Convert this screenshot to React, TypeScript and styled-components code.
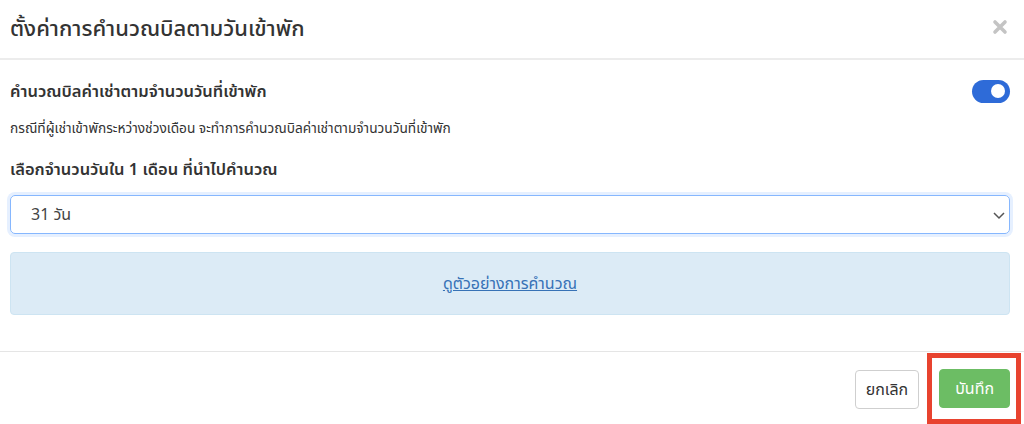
import React from "react";
import styled, { createGlobalStyle } from "styled-components";

const Global = createGlobalStyle`
  html, body { margin: 0; padding: 0; background: #fff; }
  body { font-family: "Noto Sans", "Noto Sans Thai", "Noto Sans Thai Looped", sans-serif; color: #333; }
`;

const Modal = styled.div`
  width: 1024px;
  height: 424px;
  display: flex;
  flex-direction: column;
  background: #fff;
  overflow: hidden;
`;

const Header = styled.div`
  height: 60px;
  display: flex;
  align-items: center;
  justify-content: space-between;
  padding: 0 14px 4px 10px;
  box-sizing: border-box;
  border-bottom: 2px solid #ececec;
  flex-shrink: 0;
`;

const Title = styled.h4`
  margin: 0;
  font-size: 22px;
  line-height: 30px;
  font-weight: 500;
  color: #333;
`;

const Close = styled.button`
  border: none;
  background: none;
  padding: 0;
  width: 20px;
  height: 20px;
  display: flex;
  align-items: center;
  justify-content: center;
  cursor: pointer;
`;

const Body = styled.div`
  padding: 17px 14px 0 10px;
  display: flex;
  flex-direction: column;
  height: 292px;
  box-sizing: border-box;
  border-bottom: 1px solid #e5e5e5;
  flex-shrink: 0;
`;

const Row = styled.div`
  display: flex;
  justify-content: space-between;
  align-items: center;
  height: 28px;
`;

const Label = styled.div`
  font-size: 16.5px;
  line-height: 22px;
  font-weight: 600;
  color: #333;
`;

const Desc = styled.div`
  font-size: 13.7px;
  line-height: 19px;
  color: #333;
  margin-top: 13px;
`;

const Label2 = styled(Label)`
  margin-top: 21px;
`;

const Toggle = styled.div`
  width: 38px;
  height: 23px;
  border-radius: 12px;
  background: #2e6bd8;
  position: relative;
  &::after {
    content: "";
    position: absolute;
    right: 5px;
    top: 4.5px;
    width: 14px;
    height: 14px;
    border-radius: 50%;
    background: #fff;
  }
`;

const SelectBox = styled.div`
  margin-top: 15px;
  height: 39px;
  box-sizing: border-box;
  border: 1px solid #86b7fe;
  border-radius: 5px;
  box-shadow: 0 0 0 3px rgba(13, 110, 253, 0.1);
  display: flex;
  align-items: center;
  justify-content: space-between;
  padding: 0 2px 0 20px;
  font-size: 16px;
  color: #444;
`;

const Info = styled.div`
  margin-top: 18px;
  height: 63px;
  box-sizing: border-box;
  background: #dcebf6;
  border: 1px solid #cde4f2;
  border-radius: 4px;
  display: flex;
  align-items: center;
  justify-content: center;
`;

const Link = styled.a`
  color: #3772b6;
  font-size: 16px;
  text-decoration: underline;
  cursor: pointer;
`;

const Footer = styled.div`
  flex: 1;
  display: flex;
  justify-content: flex-end;
  align-items: flex-start;
  gap: 8px;
  padding: 1px 3px 0 0;
`;

const Btn = styled.button<{ $primary?: boolean }>`
  height: 39px;
  padding: 0 ${(p) => (p.$primary ? "15px" : "10px")};
  font-family: inherit;
  font-size: 16px;
  border-radius: 4px;
  border: 1px solid ${(p) => (p.$primary ? "#6cbd64" : "#cfcfcf")};
  background: ${(p) => (p.$primary ? "#6cbd64" : "#fff")};
  color: ${(p) => (p.$primary ? "#fff" : "#333")};
  display: block;
`;

const CancelWrap = styled.div`
  padding-top: 17px;
`;

const Highlight = styled.div`
  border: 5px solid #e8432f;
  padding: 11px 6px 11px 7px;
`;

export default function App() {
  return (
    <>
      <Global />
      <Modal>
        <Header>
          <Title>ตั้งค่าการคำนวณบิลตามวันเข้าพัก</Title>
          <Close aria-label="close">
            <svg width="16" height="16" viewBox="0 0 16 16">
              <path d="M3 3 L13 13 M13 3 L3 13" stroke="#c4c4c4" strokeWidth="3.6" strokeLinecap="round" />
            </svg>
          </Close>
        </Header>
        <Body>
          <Row>
            <Label>คำนวณบิลค่าเช่าตามจำนวนวันที่เข้าพัก</Label>
            <Toggle />
          </Row>
          <Desc>กรณีที่ผู้เช่าเข้าพักระหว่างช่วงเดือน จะทำการคำนวณบิลค่าเช่าตามจำนวนวันที่เข้าพัก</Desc>
          <Label2>เลือกจำนวนวันใน 1 เดือน ที่นำไปคำนวณ</Label2>
          <SelectBox>
            <span>31 วัน</span>
            <svg width="16" height="16" viewBox="0 0 16 16">
              <path d="M3 6 L8 11 L13 6" fill="none" stroke="#555" strokeWidth="1.5" />
            </svg>
          </SelectBox>
          <Info>
            <Link>ดูตัวอย่างการคำนวณ</Link>
          </Info>
        </Body>
        <Footer>
          <CancelWrap>
            <Btn>ยกเลิก</Btn>
          </CancelWrap>
          <Highlight>
            <Btn $primary>บันทึก</Btn>
          </Highlight>
        </Footer>
      </Modal>
    </>
  );
}
